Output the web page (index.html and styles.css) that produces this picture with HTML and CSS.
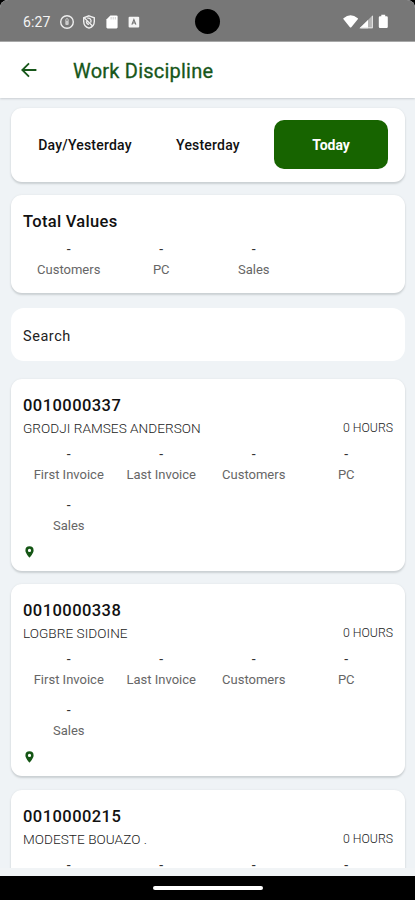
FILE: index.html
```html
<!DOCTYPE html>
<html lang="en">
<head>
<meta charset="utf-8">
<title>Work Discipline</title>
<link rel="stylesheet" href="styles.css">
</head>
<body>
<div class="screen">
  <div class="status">
    <span class="clock">6:27</span>
    <div class="left-icons">
      <svg width="16" height="16" viewBox="0 0 16 16"><circle cx="8" cy="8" r="6.3" fill="none" stroke="#eee" stroke-width="1.4"/><rect x="6.3" y="6.8" width="3.4" height="4.2" rx="1" fill="#ccc"/><path d="M6.8 7V5.8a1.2 1.2 0 0 1 2.4 0V7" fill="none" stroke="#ccc"/></svg>
      <svg width="16" height="16" viewBox="0 0 16 16"><path d="M8 1.8 13.3 3.8V7.5C13.3 11 11 13.2 8 14.2 5 13.2 2.7 11 2.7 7.5V3.8Z" fill="none" stroke="#eee" stroke-width="1.4"/><path d="M3.2 3.8 11.5 12M6.2 4.2C9 3.5 11 6 9.6 8.6M5.4 7.2C5.4 9 6.5 10.2 8 10.3" fill="none" stroke="#eee" stroke-width="1.3"/></svg>
      <svg width="16" height="16" viewBox="0 0 16 16"><path d="M6.4 1.5H12.5Q13.6 1.5 13.6 2.6V13.3Q13.6 14.4 12.5 14.4H3.5Q2.4 14.4 2.4 13.3V5.5Z" fill="#fff"/><path d="M7.1 3V5.5M9.2 3V5.5M11.3 3V5.5" stroke="#ccc"/></svg>
      <svg width="16" height="16" viewBox="0 0 16 16"><rect x="2.6" y="2.8" width="10.6" height="10.6" rx="1" fill="#f5f5f5"/><path d="M5.9 10.6 7.9 5.6 9.9 10.6M6.6 9H9.2" fill="none" stroke="#777" stroke-width="1.2"/></svg>
    </div>
    <span class="camera"></span>
    <div class="right-icons">
      <svg width="46" height="16" viewBox="0 0 46 16"><path d="M.5 4.2Q7.5-1.6 14.8 4.2Q15.2 4.8 14.8 5.3L8.3 13.2Q7.6 13.9 6.9 13.2L.5 5.3Q0 4.7.5 4.2Z" fill="#fff"/><path d="M16.5 14.3 30 1V14.3Z" fill="#b5b5b5"/><path d="M16.5 14.3 25 6V14.3Z" fill="#fff"/><path d="M29.4 2V13.8H17.7" fill="none" stroke="#e5e5e5"/><path d="M38.3.8H42.2V2.2H43.6Q44.8 2.2 44.8 3.4V12.8Q44.8 14 43.6 14H37Q35.8 14 35.8 12.8V3.4Q35.8 2.2 37 2.2H38.3Z" fill="#fff"/></svg>
    </div>
  </div>
  <header class="bar">
    <svg width="16" height="16" viewBox="0 0 16 16"><path d="M15.4 8H1.6M8 1.3 1.3 8 8 14.7" fill="none" stroke="#17571a" stroke-width="1.8"/></svg>
    <h1>Work Discipline</h1>
  </header>
  <main class="list">
    <section class="card tabs"><span class="tab">Day/Yesterday</span><span class="tab">Yesterday</span><span class="tab active">Today</span></section>
    <section class="card totals">
      <h2>Total Values</h2>
      <div class="grid">
        <div class="cell"><i>-</i><span>Customers</span></div><div class="cell"><i>-</i><span>PC</span></div><div class="cell"><i>-</i><span>Sales</span></div>
      </div>
    </section>
    <section class="search">Search</section>
    <section class="card person">
      <h3>0010000337</h3>
      <div class="row"><span>GRODJI RAMSES ANDERSON</span><span class="hours">0 HOURS</span></div>
      <div class="grid">
        <div class="cell"><i>-</i><span>First Invoice</span></div><div class="cell"><i>-</i><span>Last Invoice</span></div><div class="cell"><i>-</i><span>Customers</span></div><div class="cell"><i>-</i><span>PC</span></div><div class="cell"><i>-</i><span>Sales</span></div>
      </div>
      <svg class="pin" width="9" height="12" viewBox="0 0 9 12"><path fill-rule="evenodd" d="M4.5.3A4.1 4.1 0 0 0 .4 4.4C.4 7.3 4.5 11.7 4.5 11.7S8.6 7.3 8.6 4.4A4.1 4.1 0 0 0 4.5.3ZM4.5 2.8A1.6 1.6 0 1 1 4.5 6 1.6 1.6 0 0 1 4.5 2.8Z" fill="#155615"/></svg>
    </section>
    <section class="card person">
      <h3>0010000338</h3>
      <div class="row"><span>LOGBRE SIDOINE</span><span class="hours">0 HOURS</span></div>
      <div class="grid">
        <div class="cell"><i>-</i><span>First Invoice</span></div><div class="cell"><i>-</i><span>Last Invoice</span></div><div class="cell"><i>-</i><span>Customers</span></div><div class="cell"><i>-</i><span>PC</span></div><div class="cell"><i>-</i><span>Sales</span></div>
      </div>
      <svg class="pin" width="9" height="12" viewBox="0 0 9 12"><path fill-rule="evenodd" d="M4.5.3A4.1 4.1 0 0 0 .4 4.4C.4 7.3 4.5 11.7 4.5 11.7S8.6 7.3 8.6 4.4A4.1 4.1 0 0 0 4.5.3ZM4.5 2.8A1.6 1.6 0 1 1 4.5 6 1.6 1.6 0 0 1 4.5 2.8Z" fill="#155615"/></svg>
    </section>
    <section class="card person last">
      <h3>0010000215</h3>
      <div class="row"><span>MODESTE BOUAZO .</span><span class="hours">0 HOURS</span></div>
      <div class="grid">
        <div class="cell"><i>-</i></div><div class="cell"><i>-</i></div><div class="cell"><i>-</i></div><div class="cell"><i>-</i></div>
      </div>
    </section>
  </main>
  <footer class="nav"><span class="handle"></span></footer>
</div>
</body>
</html>
```
FILE: styles.css
```css
* { box-sizing: border-box; }
body { margin: 0; background: #000; font-family: Roboto, "Liberation Sans", sans-serif; color: #111; }
h1, h2, h3 { margin: 0; font-weight: 500; white-space: nowrap; }
i { font-style: normal; }
svg { display: block; flex: none; }
.screen { width: 415px; height: 900px; display: flex; flex-direction: column; overflow: hidden; border-radius: 8px 8px 0 0; background: #eff3f6; }
.status { position: relative; height: 42px; flex: none; background: #777; border-bottom: 1px solid #a5a5a5; display: flex; align-items: center; padding: 2px 26px 0 23px; }
.clock { width: 36px; font-size: 14px; letter-spacing: .15px; color: #f4f4f4; }
.left-icons { display: flex; gap: 6.4px; }
.right-icons { margin-left: auto; }
.camera { position: absolute; left: 195px; top: 9px; width: 25px; height: 25px; border-radius: 50%; background: #000; }
.bar { height: 56px; flex: none; background: #fff; display: flex; align-items: center; padding: 0 21px; gap: 36px; box-shadow: 0 1px 2px #c9ced2; z-index: 1; }
.bar h1 { font-size: 20px; line-height: 24px; font-weight: 400; letter-spacing: .22px; color: #17571a; -webkit-text-stroke: .3px #17571a; padding-top: 2px; }
.list { height: 770px; flex: none; overflow: hidden; padding: 10px 10px 0 11px; }
.card { background: #fff; border-radius: 11px; box-shadow: 0 2px 2px #cbd0d3, 0 0 2px #dde1e4; }
.tabs { height: 74px; margin-bottom: 13px; padding: 12px 17px; display: grid; grid-template-columns: 114px 132px 114px; }
.tab { display: flex; align-items: center; justify-content: center; font-size: 14px; font-weight: 500; letter-spacing: .2px; }
.active { height: 49px; background: #176400; color: #fff; border-radius: 10px; font-weight: 700; letter-spacing: 0; }
.totals { height: 98px; margin-bottom: 15px; padding: 17px 12px 0; }
.totals h2 { font-size: 16.5px; line-height: 20px; letter-spacing: .3px; }
.totals .grid { margin-top: 10px; }
.grid { display: grid; grid-template-columns: repeat(4, 92.5px); row-gap: 11px; margin-left: -.5px; }
.cell { height: 40px; display: flex; flex-direction: column; align-items: center; white-space: nowrap; }
.cell i { font-size: 14px; line-height: 14px; height: 18px; color: #333; }
.cell span { font-size: 13px; line-height: 20px; letter-spacing: 0; color: #666; }
.search { height: 53px; margin-bottom: 18px; padding: 3px 12px 0; display: flex; align-items: center; background: #fff; border-radius: 13px; font-size: 14.5px; letter-spacing: .55px; color: #222; }
.person { height: 192px; margin-bottom: 13px; padding: 17px 12px 0; }
.person.last { margin-top: 14px; }
.person h3 { font-size: 16.5px; line-height: 20px; letter-spacing: .45px; }
.person .grid { margin-top: 9px; }
.row { display: flex; align-items: center; height: 20px; justify-content: space-between; margin-top: 2px; line-height: 20px; font-size: 13.6px; font-weight: 300; color: #222; white-space: nowrap; }
.row span:first-child { margin-top: -1px; letter-spacing: .04px; }
.hours { font-size: 12.3px; }
.pin { margin: 8px 0 0 2px; }
.nav { height: 32px; flex: none; background: #000; border-top: 8px solid #f1f4f6; display: flex; justify-content: center; padding-top: 10px; }
.handle { width: 110px; height: 4px; border-radius: 2px; background: #fff; }
```
